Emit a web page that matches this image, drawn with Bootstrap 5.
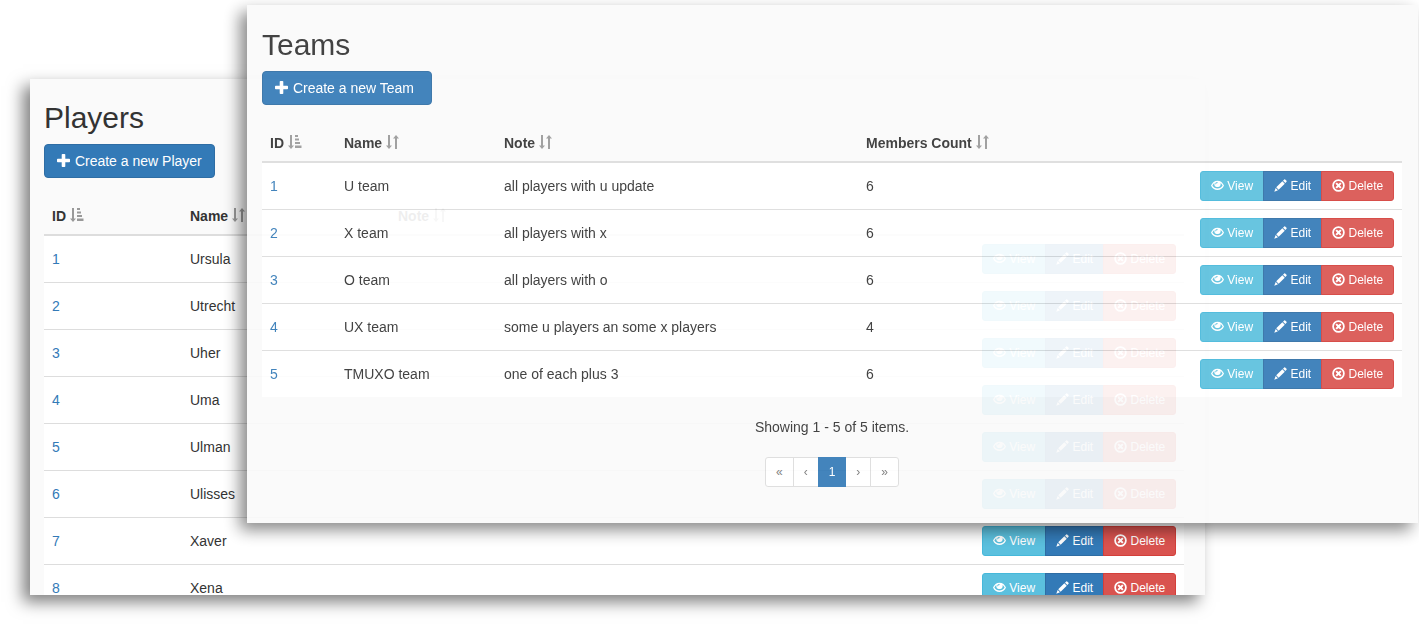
<!DOCTYPE html>
<html lang="en">
<head>
<meta charset="utf-8">
<meta name="viewport" content="width=device-width, initial-scale=1">
<title>Teams and Players</title>
<link href="https://cdn.jsdelivr.net/npm/bootstrap@5.3.0/dist/css/bootstrap.min.css" rel="stylesheet">
<style>
  body {
    font: 14px/20px "Liberation Sans", Arial, sans-serif;
    color: #333;
    background: #fff;
  }
  a { color: #337ab7; text-decoration: none; }

  /* Two overlapping sheets share one grid */
  .stage {
    display: grid;
    grid-template-columns: 217px minmax(0, 1fr) 213px;
    grid-template-rows: 74px auto 72px;
    padding: 5px 1px 30px 30px;
  }
  .sheet {
    background: #fafafa;
    box-shadow: -7px 7px 15px rgba(0, 0, 0, .5);
  }
  .sheet-back {
    grid-area: 2 / 1 / 4 / 3;
    padding: 22px 21px 0 14px;
    contain: size;
    overflow: hidden;
  }
  .sheet-front {
    grid-area: 1 / 2 / 3 / 4;
    padding: 23px 16px 36px 15px;
    opacity: .92;
    z-index: 1;
  }
  .sheet h2 { font-size: 30px; line-height: 33px; font-weight: 400; margin-bottom: 10px; }

  .btn {
    --bs-btn-font-size: 14px;
    --bs-btn-line-height: 20px;
    --bs-btn-padding-y: 6px;
    --bs-btn-padding-x: 12px;
    --bs-btn-border-radius: 4px;
    white-space: nowrap;
  }
  .btn-create { min-width: 170px; text-align: left; }
  .btn-sm {
    --bs-btn-font-size: 12px;
    --bs-btn-line-height: 18px;
    --bs-btn-padding-y: 5px;
    --bs-btn-padding-x: 10px;
    --bs-btn-border-radius: 3px;
  }
  .btn-primary { --bs-btn-bg: #337ab7; --bs-btn-border-color: #2e6da4; }
  .btn-info { --bs-btn-bg: #5bc0de; --bs-btn-border-color: #46b8da; --bs-btn-color: #fff; }
  .btn-danger { --bs-btn-bg: #d9534f; --bs-btn-border-color: #d43f3a; }

  .glyph { width: 14px; height: 14px; fill: currentColor; vertical-align: -2px; }
  .btn-sm .glyph { width: 13px; height: 13px; }
  .sorter { color: #999; vertical-align: -1px; }
  .defs { display: none; }

  .grid-table { --bs-table-bg: #fff; --bs-table-color: #333; table-layout: fixed; margin: 20px 0; border-color: #ddd; }
  .grid-table > thead { --bs-table-bg: transparent; }
  .grid-table > thead > tr > th { padding: 8px; border-bottom: 2px solid #ddd; background: transparent; }
  .grid-table > tbody > tr > td { padding: 8px; border-top: 1px solid #ddd; border-bottom: 0; vertical-align: middle; }
  .grid-table > tbody > tr:first-child > td { border-top: 0; }
  .c-id { width: 74px; }
  .c-name { width: 160px; }
  .c-note { width: 362px; }
  .c-actions { width: 210px; }
  .sheet-back .c-id { width: 138px; }
  .sheet-back .c-name { width: 208px; }
  .sheet-back .c-note { width: auto; }

  .pagination {
    --bs-pagination-font-size: 12px;
    --bs-pagination-padding-x: 10px;
    --bs-pagination-padding-y: 5px;
    --bs-pagination-color: #777;
    --bs-pagination-border-color: #ddd;
    --bs-pagination-border-radius: 3px;
    --bs-pagination-active-bg: #337ab7;
    --bs-pagination-active-border-color: #337ab7;
    line-height: 18px;
    margin: 20px 0 0;
  }
</style>
</head>
<body>
<svg class="defs" aria-hidden="true">
  <symbol id="plus" viewBox="0 0 14 14"><path d="M5.500 0h2q.8 0 .8.8v3.900h3.900q.8 0 .8.8v2q0 .8-.8.8H8.300v3.900q0 .8-.8.8h-2q-.8 0-.8-.8V8.300H.8q-.8 0-.8-.8v-2q0-.8.8-.8h3.900V.8q0-.8.8-.8z"/></symbol>
  <symbol id="eye" viewBox="0 0 14 14"><path fill-rule="evenodd" d="M7 1.800C3.700 1.800 1.300 4 0 7c1.300 3 3.700 4.900 7 4.900S12.700 10 14 7C12.700 4 10.300 1.800 7 1.800zM3.800 4.300C3 6.800 4.600 8.700 7 8.700s4-1.900 3.200-4.400c.9.600 1.700 1.600 2.300 2.700-1.200 2-3.100 3.200-5.500 3.200S2.700 9 1.500 7c.6-1.100 1.400-2.100 2.300-2.700zM6.800 3.300C5 3.300 4.300 4.700 4.700 6.200c.6-1.100 1.200-1.700 2.600-1.900z"/></symbol>
  <symbol id="pencil" viewBox="0 0 14 14"><path d="M11 .5q.5-.4 1 0L13.500 2q.4.500 0 1l-1.300 1.300-2.500-2.500zM9 2.400 11.600 5 5 11.600 2.400 9zM1.800 9.700l2.500 2.500L.3 13.700z"/></symbol>
  <symbol id="remove" viewBox="0 0 14 14"><circle cx="7" cy="7" r="5.800" fill="none" stroke="currentColor" stroke-width="1.900"/><path d="M5.200 3.700 7 5.500l1.800-1.800 1.500 1.500L8.500 7l1.800 1.800-1.500 1.500L7 8.500l-1.800 1.800-1.500-1.500L5.500 7 3.700 5.200z"/></symbol>
  <symbol id="sort" viewBox="0 0 14 14"><path d="M2 0h2v10.500h2L3 14 0 10.500h2zM9 14h2V3.500h2L10 0 7 3.500h2z"/></symbol>
  <symbol id="sort-asc" viewBox="0 0 14 14"><path d="M2 0h2v10.500h2L3 14 0 10.500h2zM7 0h3v2H7zM7 3.500h4v2H7zM7 7h5v2H7zM7 10.500h6.500v2.500H7z"/></symbol>
</svg>

<main class="stage">
  <section class="sheet sheet-back">
    <h2>Players</h2>
    <button type="button" class="btn btn-primary btn-create"><svg class="glyph" aria-hidden="true"><use href="#plus"/></svg> Create a new Player</button>
    <table class="table grid-table">
      <thead><tr>
        <th class="c-id">ID <svg class="glyph sorter"><use href="#sort-asc"/></svg></th>
        <th class="c-name">Name <svg class="glyph sorter"><use href="#sort"/></svg></th>
        <th class="c-note">Note <svg class="glyph sorter"><use href="#sort"/></svg></th>
        <th class="c-actions"></th>
      </tr></thead>
      <tbody id="players"></tbody>
    </table>
  </section>

  <section class="sheet sheet-front">
    <h2>Teams</h2>
    <button type="button" class="btn btn-primary btn-create"><svg class="glyph" aria-hidden="true"><use href="#plus"/></svg> Create a new Team</button>
    <table class="table grid-table">
      <thead><tr>
        <th class="c-id">ID <svg class="glyph sorter"><use href="#sort-asc"/></svg></th>
        <th class="c-name">Name <svg class="glyph sorter"><use href="#sort"/></svg></th>
        <th class="c-note">Note <svg class="glyph sorter"><use href="#sort"/></svg></th>
        <th>Members Count <svg class="glyph sorter"><use href="#sort"/></svg></th>
        <th class="c-actions"></th>
      </tr></thead>
      <tbody id="teams"></tbody>
    </table>
    <p class="text-center mb-0">Showing 1 - 5 of 5 items.</p>
    <nav aria-label="Team pages" class="d-flex justify-content-center">
      <ul class="pagination">
        <li class="page-item"><a class="page-link" href="#">«</a></li>
        <li class="page-item"><a class="page-link" href="#">‹</a></li>
        <li class="page-item active"><a class="page-link" href="#">1</a></li>
        <li class="page-item"><a class="page-link" href="#">›</a></li>
        <li class="page-item"><a class="page-link" href="#">»</a></li>
      </ul>
    </nav>
  </section>
</main>

<script src="https://cdn.jsdelivr.net/npm/bootstrap@5.3.0/dist/js/bootstrap.bundle.min.js"></script>
<script>
  const glyph = id => `<svg class="glyph" aria-hidden="true"><use href="#${id}"/></svg>`;
  const actions = `<div class="btn-group">
    <button type="button" class="btn btn-sm btn-info">${glyph('eye')} View</button>
    <button type="button" class="btn btn-sm btn-primary">${glyph('pencil')} Edit</button>
    <button type="button" class="btn btn-sm btn-danger">${glyph('remove')} Delete</button>
  </div>`;
  const fill = (id, rows) => {
    document.getElementById(id).innerHTML = rows.map((cells, i) =>
      `<tr><td><a href="#">${i + 1}</a></td>${cells.map(c => `<td>${c}</td>`).join('')}<td class="text-end">${actions}</td></tr>`).join('');
  };
  fill('players', ['Ursula', 'Utrecht', 'Uher', 'Uma', 'Ulman', 'Ulisses', 'Xaver', 'Xena'].map(n => [n, '']));
  fill('teams', [
    ['U team', 'all players with u update', 6],
    ['X team', 'all players with x', 6],
    ['O team', 'all players with o', 6],
    ['UX team', 'some u players an some x players', 4],
    ['TMUXO team', 'one of each plus 3', 6]
  ]);
</script>
</body>
</html>
